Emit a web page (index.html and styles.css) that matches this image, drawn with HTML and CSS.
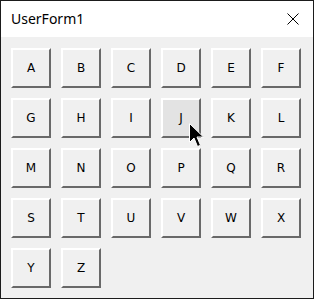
FILE: index.html
```html
<!DOCTYPE html>
<html lang="en">

<head>
    <meta charset="utf-8">
    <title>UserForm1</title>
    <link rel="stylesheet" href="styles.css">
</head>

<body>
    <div class="window">
        <div class="titlebar">
            <span class="title">UserForm1</span>
            <svg class="close" width="12" height="12" viewBox="0 0 12 12">
                <path d="M0.5 0.5 L11.5 11.5 M11.5 0.5 L0.5 11.5" stroke="#000" stroke-width="1" fill="none"/>
            </svg>
        </div>

        <div class="form">
            <div class="grid">
                <button class="key">A</button>
                <button class="key">B</button>
                <button class="key">C</button>
                <button class="key">D</button>
                <button class="key">E</button>
                <button class="key">F</button>
                <button class="key">G</button>
                <button class="key">H</button>
                <button class="key">I</button>
                <button class="key hover">J
                    <svg class="cursor" width="16" height="25" viewBox="0 0 16 25">
                        <path d="M0.5 0.5 L0.5 19.5 L5 15 L8.5 23.5 L11.5 22.3 L8 14 L14.5 14 Z" fill="#000" stroke="#fff" stroke-width="1" stroke-linejoin="miter"/>
                    </svg>
                </button>
                <button class="key">K</button>
                <button class="key">L</button>
                <button class="key">M</button>
                <button class="key">N</button>
                <button class="key">O</button>
                <button class="key">P</button>
                <button class="key">Q</button>
                <button class="key">R</button>
                <button class="key">S</button>
                <button class="key">T</button>
                <button class="key">U</button>
                <button class="key">V</button>
                <button class="key">W</button>
                <button class="key">X</button>
                <button class="key">Y</button>
                <button class="key">Z</button>
            </div>
        </div>
    </div>
</body>

</html>
```

FILE: styles.css
```css
body {
    margin: 0;
    padding: 0;
    font-family: "DejaVu Sans", sans-serif;
}

.window {
    width: 314px;
    height: 299px;
    box-sizing: border-box;
    border: 1px solid #1b1b1b;
    background-color: #f0f0f0;
    display: flex;
    flex-direction: column;
}

.titlebar {
    height: 36px;
    background-color: #ffffff;
    display: flex;
    align-items: center;
    justify-content: space-between;
    padding: 0 14px 0 10px;
}

.title {
    font-family: "Noto Sans", sans-serif;
    font-size: 14px;
    color: #000000;
    margin-top: -2px;
}

.close {
    margin-top: -1px;
}

.form {
    padding: 11px 10px 10px;
}

.grid {
    display: grid;
    grid-template-columns: repeat(6, 40px);
    grid-auto-rows: 40px;
    gap: 10px;
}

.key {
    position: relative;
    margin: 0;
    padding: 0;
    font-family: "DejaVu Sans", sans-serif;
    font-size: 12px;
    color: #000000;
    background-color: #f0f0f0;
    border: 2px solid;
    border-color: #ffffff #696969 #696969 #ffffff;
}

.key.hover {
    background-color: #e3e3e3;
}

.cursor {
    position: absolute;
    left: 26px;
    top: 23px;
}
```
